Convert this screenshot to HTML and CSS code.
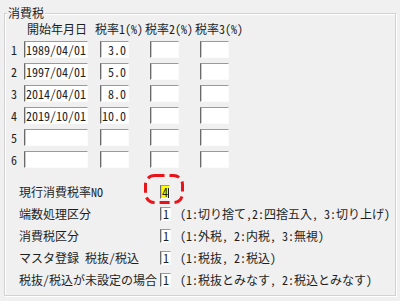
FILE: index.html
```html
<!DOCTYPE html>
<html lang="ja">
<head>
<meta charset="utf-8">
<title>消費税</title>
<link rel="stylesheet" href="styles.css">
</head>
<body>
<fieldset class="group">
  <legend class="title">消費税</legend>
  <div class="rates">
    <div class="hd"></div>
    <div class="hd hd-date">開始年月日</div>
    <div class="hd">税率1(%)</div>
    <div class="hd">税率2(%)</div>
    <div class="hd">税率3(%)</div>

    <div class="num">1</div>
    <div class="box date">1989/04/01</div>
    <div class="box rate">&nbsp;3.0</div>
    <div class="box rate"></div>
    <div class="box rate"></div>

    <div class="num">2</div>
    <div class="box date">1997/04/01</div>
    <div class="box rate">&nbsp;5.0</div>
    <div class="box rate"></div>
    <div class="box rate"></div>

    <div class="num">3</div>
    <div class="box date">2014/04/01</div>
    <div class="box rate">&nbsp;8.0</div>
    <div class="box rate"></div>
    <div class="box rate"></div>

    <div class="num">4</div>
    <div class="box date">2019/10/01</div>
    <div class="box rate">10.0</div>
    <div class="box rate"></div>
    <div class="box rate"></div>

    <div class="num">5</div>
    <div class="box date"></div>
    <div class="box rate"></div>
    <div class="box rate"></div>
    <div class="box rate"></div>

    <div class="num">6</div>
    <div class="box date"></div>
    <div class="box rate"></div>
    <div class="box rate"></div>
    <div class="box rate"></div>
  </div>

  <div class="settings">
    <div class="row">
      <span class="label">現行消費税率NO</span>
      <span class="cur-wrap">
        <span class="box small current">4<i class="caret"></i></span>
        <svg class="mark" width="40" height="30" viewBox="0 0 40 30" aria-hidden="true">
          <rect x="1.5" y="1.5" width="37" height="27" rx="9" ry="9" fill="none" stroke="#e8141a" stroke-width="3" stroke-dasharray="10 5"/>
        </svg>
      </span>
      <span class="desc"></span>
    </div>
    <div class="row">
      <span class="label">端数処理区分</span>
      <span class="box small">1</span>
      <span class="desc">(1:切り捨て,2:四捨五入, 3:切り上げ)</span>
    </div>
    <div class="row">
      <span class="label">消費税区分</span>
      <span class="box small">1</span>
      <span class="desc">(1:外税, 2:内税, 3:無視)</span>
    </div>
    <div class="row">
      <span class="label">マスタ登録 税抜/税込</span>
      <span class="box small">1</span>
      <span class="desc">(1:税抜, 2:税込)</span>
    </div>
    <div class="row">
      <span class="label">税抜/税込が未設定の場合</span>
      <span class="box small">1</span>
      <span class="desc">(1:税抜とみなす, 2:税込とみなす)</span>
    </div>
  </div>
</fieldset>
</body>
</html>
```

FILE: styles.css
```css
* { box-sizing: border-box; }

html, body {
  margin: 0;
  padding: 0;
  background: #f0f0f0;
}

body {
  width: 400px;
  height: 301px;
  overflow: hidden;
  font-family: "Noto Sans CJK JP", "Noto Sans", sans-serif;
  font-size: 12px;
  line-height: 16px;
  color: #1e1e1e;
  font-feature-settings: "hwid" 1;
}

.group {
  margin: 5px 4px 0 4px;
  padding: 1px 3px 0 3px;
  height: 291px;
  min-inline-size: 0;
  border: 1px solid #d2d2d2;
  box-shadow: inset 1px 1px 0 #ffffff, 1px 1px 0 #ffffff;
}

.title {
  padding: 0 1px;
  margin-left: -1px;
  background: #f0f0f0;
  line-height: 16px;
}

.rates {
  display: grid;
  grid-template-columns: 16px 71px 50px 50px 50px;
  grid-template-rows: 14px;
  grid-auto-rows: 17px;
  row-gap: 5px;
}

.hd {
  white-space: nowrap;
  line-height: 14px;
}

.hd-date { padding-left: 3px; }

.num {
  padding-left: 3px;
  align-self: center;
  line-height: 16px;
}

.box {
  display: block;
  background: #ffffff;
  border-style: solid;
  border-width: 1px;
  border-color: #9a9a9a #fbfbfb #fbfbfb #6a6a6a;
  box-shadow: inset 1px 0 0 #c9c9c9;
  padding: 0 0 0 1px;
  line-height: 15px;
  white-space: pre;
  overflow: hidden;
}

.date { width: 64px; }

.rate {
  width: 29px;
  margin-left: 5px;
}

.settings {
  margin-top: 13px;
  padding-left: 11px;
}

.row {
  display: grid;
  grid-template-columns: 132px 11px auto;
  column-gap: 9px;
  align-items: center;
  height: 22px;
}

.label { white-space: nowrap; }

.desc { white-space: nowrap; }

.small {
  width: 11px;
  height: 14px;
  line-height: 12px;
  padding-left: 2px;
  overflow: visible;
}

.cur-wrap {
  position: relative;
  width: 11px;
  height: 14px;
}

.current {
  width: 10px;
  background: #ffff00;
  padding-left: 1px;
}

.caret {
  display: inline-block;
  width: 1px;
  height: 10px;
  background: #1e1e1e;
  vertical-align: -1px;
}

.mark {
  position: absolute;
  left: -16px;
  top: -11px;
  overflow: visible;
}
```
